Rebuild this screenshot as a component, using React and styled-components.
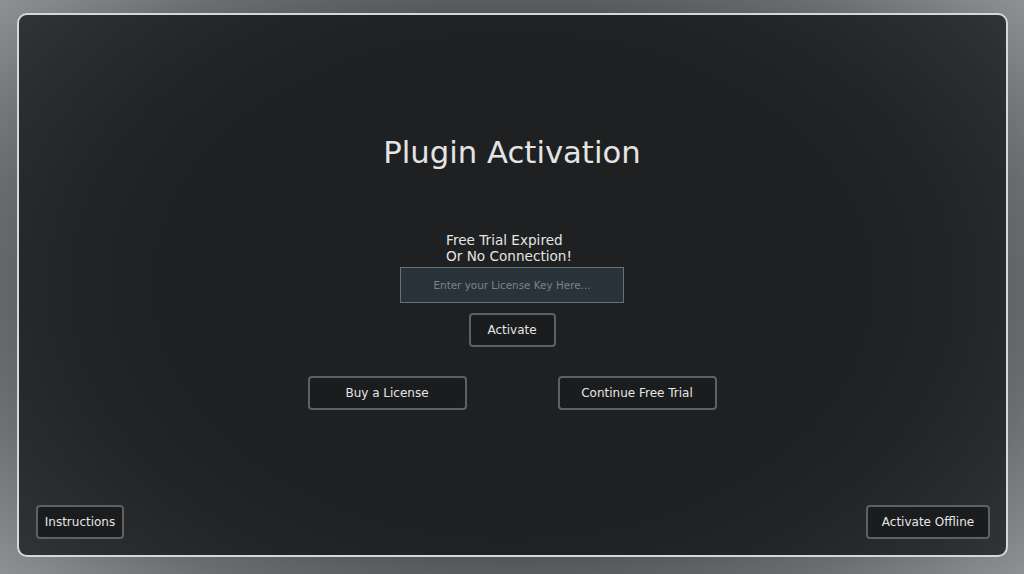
import React from 'react'
import styled, { createGlobalStyle } from 'styled-components'

const GlobalStyle = createGlobalStyle`
    html, body {
        margin: 0;
        padding: 0;
        width: 100%;
        height: 100%;
    }
    body {
        font-family: "DejaVu Sans", Verdana, sans-serif;
        overflow: hidden;
    }
`

const Fundo = styled.div`
    width: 1024px;
    height: 574px;
    box-sizing: border-box;
    padding: 13px 16px 17px 17px;
    background: radial-gradient(ellipse 75% 85% at 50% 50%, #3e3f43 40%, #6a6c70 70%, #a4a6a9 100%);
`

const Painel = styled.div`
    height: 100%;
    box-sizing: border-box;
    border: 2px solid #d6d7d9;
    border-radius: 10px;
    background: radial-gradient(ellipse 62% 80% at 50% 50%, #1f2022 55%, #232426 72%, #2b2c2e 90%, #313234 100%);
    display: flex;
    flex-direction: column;
    align-items: center;
    padding: 0 16px 16px 17px;
    color: #e4e4e4;
`

const Titulo = styled.h1`
    margin: 119px 2px 0 0;
    font-size: 30.7px;
    font-weight: normal;
    line-height: 38px;
`

const Aviso = styled.div`
    margin: 60px 8px 0 0;
    font-size: 13.6px;
    line-height: 16px;
    text-align: left;
`

const CampoLicenca = styled.input`
    margin: 3px 2px 0 0;
    width: 224px;
    height: 36px;
    box-sizing: border-box;
    background: #29333a;
    border: 1px solid #687176;
    color: #d8d8d8;
    font-family: "DejaVu Sans", Verdana, sans-serif;
    font-size: 10.4px;
    text-align: center;
    outline: none;

    &::placeholder {
        color: #7c8489;
    }
`

const Botao = styled.button`
    width: ${props => props.largura}px;
    height: 34px;
    box-sizing: border-box;
    background: #1b1c1e;
    border: 2px solid #5e6062;
    border-radius: 4px;
    color: #e6e6e6;
    font-family: "DejaVu Sans", Verdana, sans-serif;
    font-size: 12px;
    padding: 0;
    cursor: pointer;
`

const BotaoAtivar = styled(Botao)`
    margin: 10px 2px 0 0;
`

const LinhaBotoes = styled.div`
    margin: 29px 2px 0 0;
    display: flex;
    gap: 91px;
`

const Rodape = styled.div`
    margin-top: auto;
    align-self: stretch;
    display: flex;
    justify-content: space-between;
`

class App extends React.Component {
    render () {
        return (
            <Fundo>
                <GlobalStyle />
                <Painel>
                    <Titulo>Plugin Activation</Titulo>
                    <Aviso>Free Trial Expired<br />Or No Connection!</Aviso>
                    <CampoLicenca type="text" placeholder="Enter your License Key Here..." />
                    <BotaoAtivar largura={87}>Activate</BotaoAtivar>
                    <LinhaBotoes>
                        <Botao largura={159}>Buy a License</Botao>
                        <Botao largura={159}>Continue Free Trial</Botao>
                    </LinhaBotoes>
                    <Rodape>
                        <Botao largura={88}>Instructions</Botao>
                        <Botao largura={124}>Activate Offline</Botao>
                    </Rodape>
                </Painel>
            </Fundo>
        )
    }
}

export default App
